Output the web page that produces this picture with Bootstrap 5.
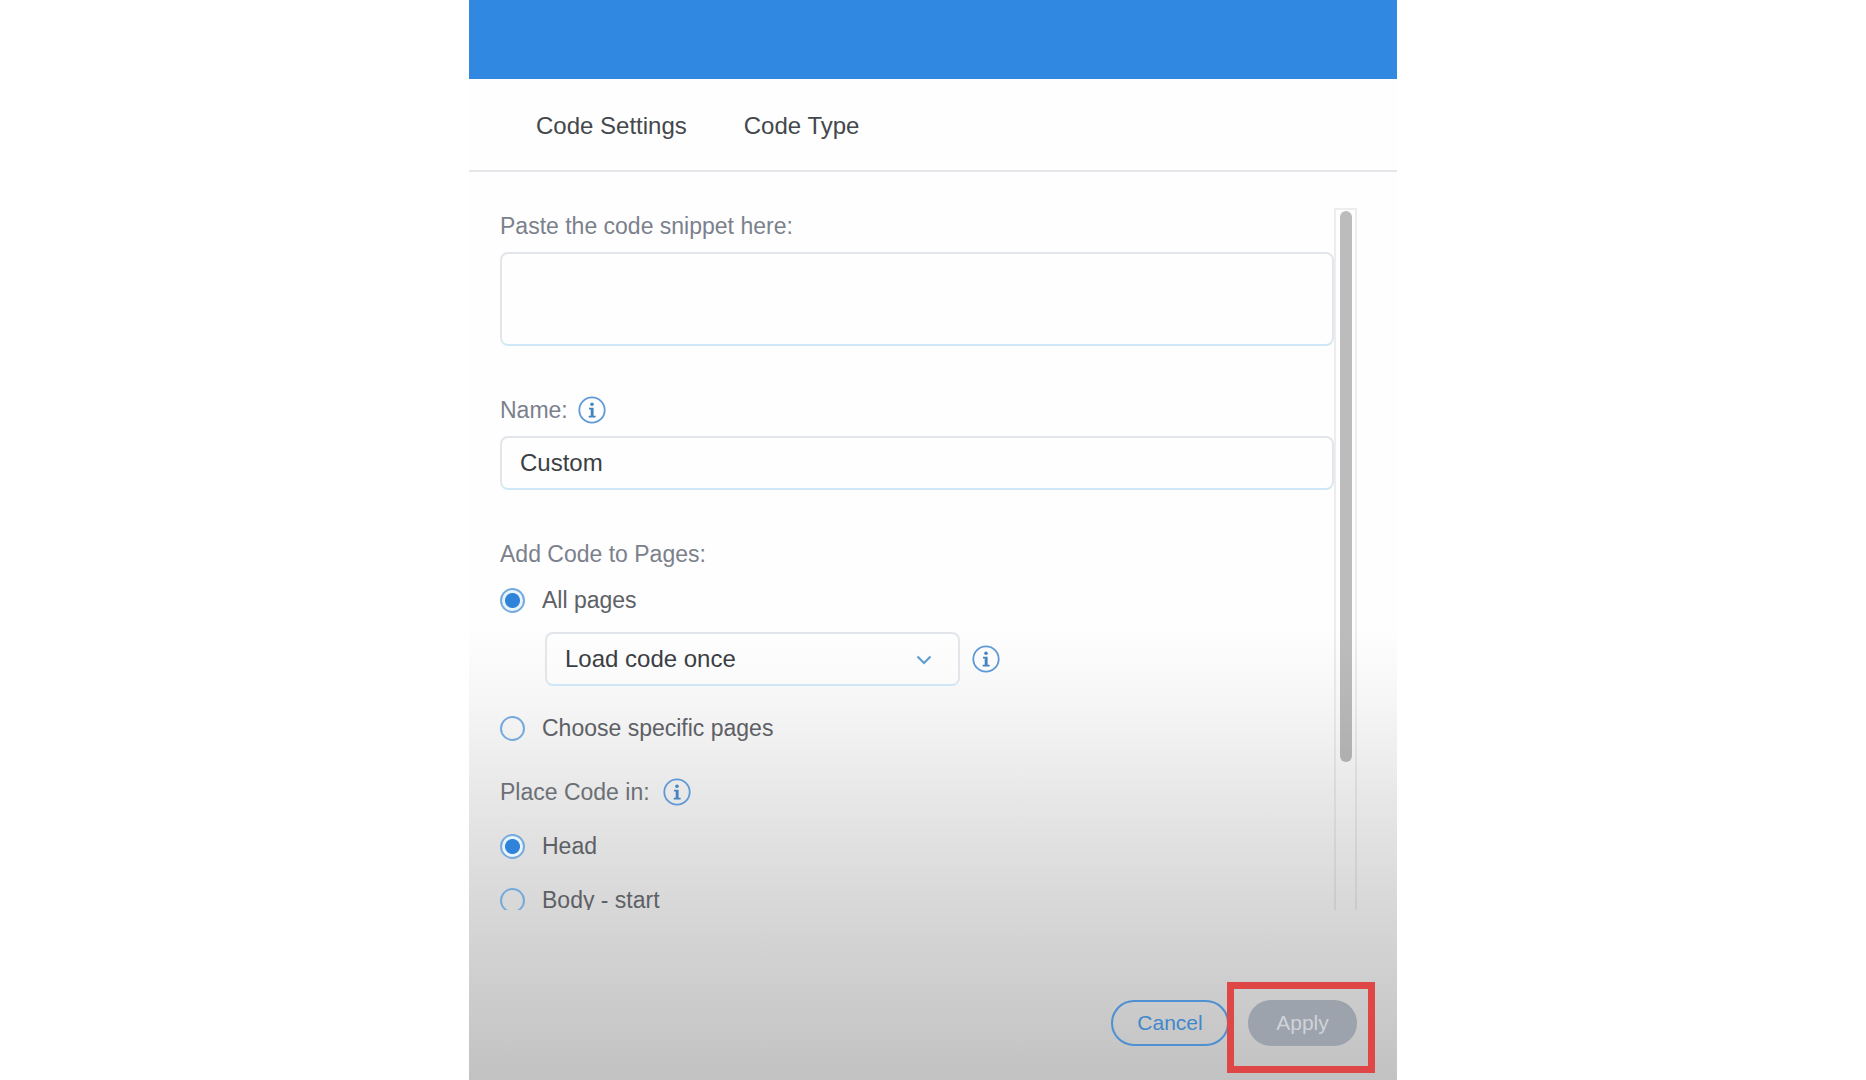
<!DOCTYPE html>
<html lang="en">
<head>
<meta charset="utf-8">
<meta name="viewport" content="width=device-width, initial-scale=1">
<title>Code Settings</title>
<link href="https://cdn.jsdelivr.net/npm/bootstrap@5.3.0/dist/css/bootstrap.min.css" rel="stylesheet">
<style>
body{font-family:"Liberation Sans",Arial,sans-serif;font-size:23px;line-height:28px;color:#5d6065;background:#fff}
.panel{max-width:928px;min-height:100vh;background:linear-gradient(to bottom,#fefefe 0,#fefefe 58%,#f6f6f6 65%,#e7e7e7 74%,#d9d9d9 83%,#cecece 91%,#c2c2c2 100%)}
.topbar{height:79px;background:#3088e1}
.tabs{height:93px;padding:2px 67px 0;gap:57px;border-bottom:2px solid #e5e6e9}
.tabs a{font-size:24px;color:#44474b;text-decoration:none}
.viewer{height:702px;margin:36px 40px 0 31px}
.fields{overflow:hidden}
.caption{color:#7b818c}
.place .caption{color:#6c7076}
.field{font-size:24px;line-height:28px;color:#3b3e43;border:2px solid #e2e6ea;border-bottom-color:#cfe8f7;border-radius:8px;background-color:transparent;padding:11px 18px}
.snippet{height:94px;resize:none}
.block-end{margin-bottom:50px}
.row-end{margin-bottom:18px}
.name-row{gap:10px;margin-bottom:12px}
.place-row{gap:13px;margin:36px 0 26px}
.once{width:415px;background-color:rgba(255,255,255,.4);background-image:none;appearance:none}
.picker{padding-left:45px;gap:12px;margin-bottom:28px}
.chevron{position:absolute;right:28px;top:22px;pointer-events:none}
.info{width:28px;height:28px;flex:none;border:0;padding:0;background:none;display:block}
.info svg{display:block}
.choice{gap:17px;height:28px}
.choice input{width:25px;height:25px;margin:0;flex:none;appearance:none;border-radius:50%;border:2px solid #76a9dc;background:transparent}
.choice input:checked{background:radial-gradient(circle,#2f83d8 0,#2f83d8 7px,#e8f5ff 8px)}
.head-choice{margin-bottom:26px}
.rail{width:23px;flex:none;border:2px solid rgba(120,110,120,.12);border-bottom:0;padding:1px 4px}
.thumb{height:79%;width:12px;border-radius:6px;background:rgba(0,0,0,.26)}
.actions{padding:90px 40px 34px;gap:19px}
.pill{height:46px;border-radius:23px;font-size:21px;line-height:28px;padding:0;border:2px solid #4e90d2;color:#4287cb;width:118px;background:transparent}
.pill.apply{width:109px;border-color:#9ca3ad;background:#9ca3ad;color:#cfd3d8;opacity:1}
.marker{position:absolute;inset:-18px -18px -27px -21px;border:7px solid #df4747;pointer-events:none}
.g-paste{margin-bottom:12px}
</style>
<script src="https://cdn.jsdelivr.net/npm/bootstrap@5.3.0/dist/js/bootstrap.bundle.min.js"></script>
</head>
<body>
<svg class="d-none" aria-hidden="true">
  <symbol id="info" viewBox="0 0 28 28"><circle cx="14" cy="14" r="12.7" fill="none" stroke="#5f9ad6" stroke-width="1.8"/><circle cx="14" cy="8.3" r="1.8" fill="#4484bf"/><path d="M11 11.7h4.600v8h2v1.700h-6.900v-1.700h2v-6.300H11z" fill="#4484bf"/></symbol>
</svg>
<main class="panel container-fluid mx-auto p-0 d-flex flex-column">
  <header class="topbar"></header>
  <nav class="tabs d-flex align-items-center">
    <a href="#settings">Code Settings</a>
    <a href="#type">Code Type</a>
  </nav>
  <form class="d-flex flex-column">
    <div class="viewer d-flex">
      <div class="fields flex-grow-1">
        <div class="block-end">
          <label class="caption d-block pt-1 g-paste" for="snippet">Paste the code snippet here:</label>
          <textarea class="field snippet form-control" id="snippet"></textarea>
        </div>
        <div class="block-end">
          <div class="name-row d-flex align-items-center">
            <label class="caption" for="name">Name:</label>
            <button class="info" type="button" aria-label="About the name"><svg width="28" height="28"><use href="#info"/></svg></button>
          </div>
          <input class="field form-control" id="name" type="text" value="Custom">
        </div>
        <div role="radiogroup" aria-labelledby="pages">
          <div class="caption row-end" id="pages">Add Code to Pages:</div>
          <div class="choice row-end d-flex align-items-center"><input type="radio" name="pages" id="all" checked><label for="all">All pages</label></div>
          <div class="picker d-flex align-items-center">
            <div class="position-relative">
              <select class="field form-select once" aria-label="Loading"><option>Load code once</option></select>
              <svg class="chevron" width="16" height="12" viewBox="0 0 16 12" fill="none" stroke="#5f9fd0" stroke-width="2.2"><path d="M1.5 2.5 8 9l6.500-6.500"/></svg>
            </div>
            <button class="info" type="button" aria-label="About loading"><svg width="28" height="28"><use href="#info"/></svg></button>
          </div>
          <div class="choice d-flex align-items-center"><input type="radio" name="pages" id="some"><label for="some">Choose specific pages</label></div>
        </div>
        <div class="place" role="radiogroup" aria-labelledby="place">
          <div class="place-row d-flex align-items-center">
            <span class="caption" id="place">Place Code in:</span>
            <button class="info" type="button" aria-label="About placement"><svg width="28" height="28"><use href="#info"/></svg></button>
          </div>
          <div class="choice head-choice d-flex align-items-center"><input type="radio" name="place" id="head" checked><label for="head">Head</label></div>
          <div class="choice d-flex align-items-center"><input type="radio" name="place" id="body"><label for="body">Body - start</label></div>
        </div>
      </div>
      <div class="rail"><div class="thumb"></div></div>
    </div>
    <div class="actions d-flex justify-content-end">
      <button class="pill btn" type="button">Cancel</button>
      <div class="position-relative"><button class="pill apply btn" type="submit" disabled>Apply</button><span class="marker"></span></div>
    </div>
  </form>
</main>
</body>
</html>
